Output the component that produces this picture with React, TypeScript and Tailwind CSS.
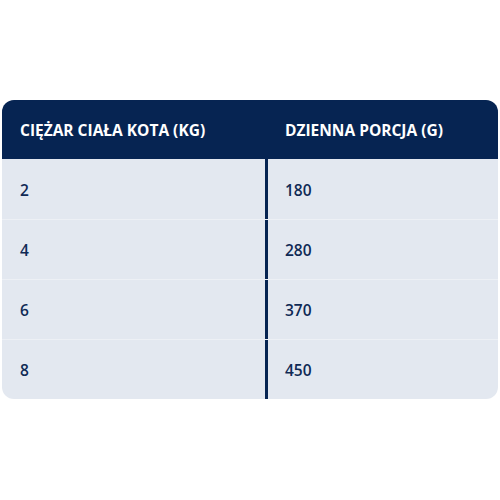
const rows = [
  ['2', '180'],
  ['4', '280'],
  ['6', '370'],
  ['8', '450'],
];

export default function App() {
  return (
    <div className="w-[500px] h-[500px] bg-white pt-[100px] px-[2px]" style={{ fontFamily: '"Open Sans", "Noto Sans", sans-serif' }}>
      <div className="rounded-[12px] overflow-hidden bg-[#e3e8f0]">
        <div className="grid grid-cols-[265px_1fr] h-[59px] bg-[#062452] text-white font-bold text-[15.5px] tracking-[0px] uppercase">
          <div className="flex items-center pl-[18px] pt-[3px]">Ciężar ciała kota (kg)</div>
          <div className="flex items-center pl-[18px] pt-[3px]">Dzienna porcja (g)</div>
        </div>
        {rows.map(([w, g], i) => (
          <div
            key={i}
            className={`grid grid-cols-[263px_3px_1fr] h-[60px] text-[#0f2a55] text-[15.5px] font-[550] ${i > 0 ? 'border-t border-[#edf0f5]' : ''}`}
          >
            <div className="flex items-center pl-[18px] pt-[3px]">{w}</div>
            <div className="bg-[#062452]" />
            <div className="flex items-center pl-[17px] pt-[3px]">{g}</div>
          </div>
        ))}
      </div>
    </div>
  );
}
